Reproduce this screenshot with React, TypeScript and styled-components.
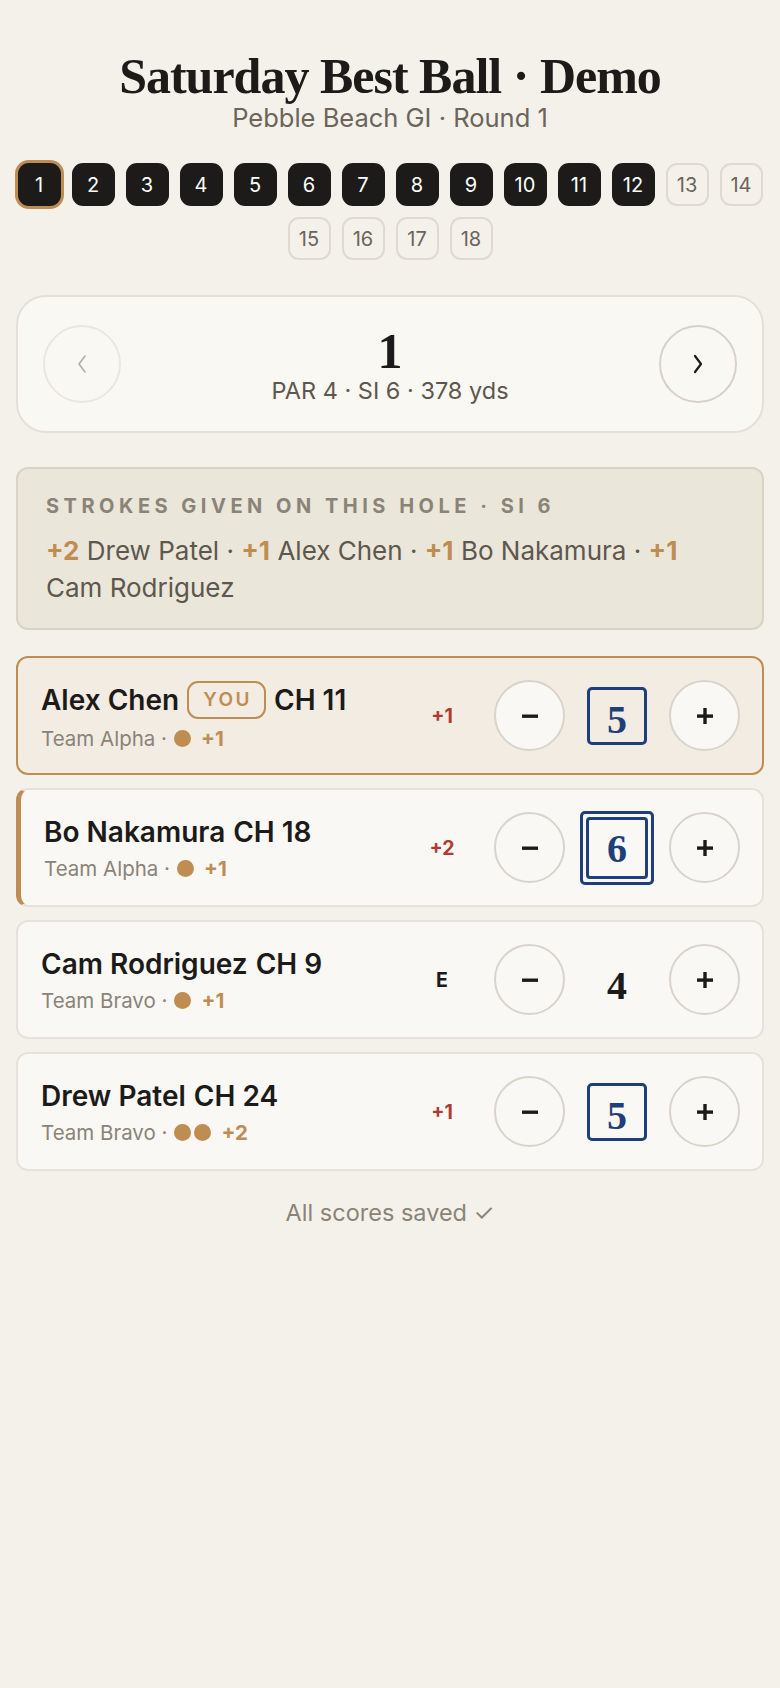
import React from "react";
import styled, { createGlobalStyle, css } from "styled-components";

const Global = createGlobalStyle`
  html, body { margin: 0; padding: 0; background: #f4f1ea; }
  body { font-family: Inter, "Noto Sans", sans-serif; color: #1c1b19; }
  * { box-sizing: border-box; }
`;

const Page = styled.div`
  width: 780px;
  min-height: 1688px;
  padding: 44px 16px 40px;
  display: flex;
  flex-direction: column;
  align-items: stretch;
`;

const Header = styled.header`
  display: flex;
  flex-direction: column;
  align-items: center;
  margin-bottom: 31px;
`;

const Title = styled.h1`
  margin: 0;
  font-family: "Liberation Serif", "DejaVu Serif", serif;
  font-weight: 700;
  font-size: 50px;
  line-height: 64px;
  letter-spacing: -1px;
  color: #1c1b19;
`;

const Subtitle = styled.div`
  font-size: 25.5px;
  line-height: 28px;
  color: #6b645a;
  margin-top: -4px;
`;

const HoleStrip = styled.nav`
  display: flex;
  flex-wrap: wrap;
  justify-content: center;
  gap: 11px 11px;
  margin-bottom: 35px;
`;

const Chip = styled.button<{ $state: "current" | "done" | "todo" }>`
  width: 43px;
  height: 43px;
  border-radius: 11px;
  font-family: Inter, sans-serif;
  font-size: 20px;
  display: flex;
  align-items: center;
  justify-content: center;
  padding: 0;
  ${(p) =>
    p.$state === "todo"
      ? css`
          background: transparent;
          border: 2px solid #dedad1;
          color: #6b645a;
        `
      : css`
          background: #1c1b19;
          border: none;
          color: #ffffff;
        `}
  ${(p) =>
    p.$state === "current" &&
    css`
      box-shadow: 0 0 0 3px #bf8d52;
    `}
`;

const HoleCard = styled.section`
  background: #faf8f3;
  border: 2px solid #e4e0d8;
  border-radius: 30px;
  height: 138px;
  padding: 0 25px;
  display: flex;
  align-items: center;
  justify-content: space-between;
  margin-bottom: 34px;
`;

const NavButton = styled.button<{ $enabled: boolean }>`
  width: 78px;
  height: 78px;
  border-radius: 50%;
  background: transparent;
  border: 2px solid ${(p) => (p.$enabled ? "#d6d2ca" : "#eae7e1")};
  color: ${(p) => (p.$enabled ? "#1c1b19" : "#b3aea5")};
  display: flex;
  align-items: center;
  justify-content: center;
  padding: 0;
`;

const HoleInfo = styled.div`
  display: flex;
  flex-direction: column;
  align-items: center;
`;

const HoleNumber = styled.div`
  font-family: "Liberation Serif", serif;
  font-weight: 700;
  font-size: 50px;
  line-height: 50px;
  margin-top: 4px;
`;

const HoleMeta = styled.div`
  font-size: 23.5px;
  line-height: 30px;
  color: #5d574e;
`;

const StrokesBox = styled.section`
  background: #ebe6da;
  border: 2px solid #d9d3c6;
  border-radius: 12px;
  padding: 25px 28px 22px;
  margin-bottom: 26px;
`;

const StrokesLabel = styled.div`
  font-size: 20px;
  font-weight: 700;
  letter-spacing: 4.5px;
  color: #8a8378;
  line-height: 24px;
  margin-bottom: 14px;
`;

const StrokesText = styled.div`
  font-size: 26px;
  line-height: 37px;
  color: #5d574e;
`;

const Gold = styled.span`
  color: #bf8d52;
  font-weight: 700;
`;

const PlayerList = styled.div`
  display: flex;
  flex-direction: column;
  gap: 13px;
`;

const PlayerCard = styled.div<{ $me?: boolean; $accent?: boolean }>`
  height: 119px;
  border-radius: 12px;
  display: flex;
  align-items: center;
  padding: 0 22px 0 23px;
  background: ${(p) => (p.$me ? "#f3ece2" : "#faf8f4")};
  border: 2px solid ${(p) => (p.$me ? "#bf8d52" : "#e6e2da")};
  ${(p) =>
    p.$accent &&
    css`
      border-left: 5px solid #bf8d52;
      padding-left: 23px;
    `}
`;

const PlayerInfo = styled.div`
  flex: 1;
  display: flex;
  flex-direction: column;
  gap: 8px;
`;

const NameRow = styled.div`
  display: flex;
  align-items: center;
  gap: 8px;
  font-size: 28px;
  font-weight: 600;
  line-height: 34px;
  color: #1c1b19;
`;

const YouBadge = styled.span`
  border: 2px solid #bf8d52;
  border-radius: 11px;
  color: #bf8d52;
  font-size: 19px;
  font-weight: 600;
  letter-spacing: 2.5px;
  height: 38px;
  padding: 0 12px 0 14px;
  display: inline-flex;
  align-items: center;
`;

const SubRow = styled.div`
  display: flex;
  align-items: center;
  font-size: 20.5px;
  color: #8a8378;
  line-height: 24px;
`;

const Dots = styled.span`
  display: inline-flex;
  gap: 3px;
  margin-left: 7px;
  margin-right: 10px;
`;

const Dot = styled.span`
  width: 17px;
  height: 17px;
  border-radius: 50%;
  background: #bf8d52;
`;

const DotValue = styled.span`
  color: #bf8d52;
  font-weight: 700;
`;

const Diff = styled.div<{ $even?: boolean }>`
  width: 60px;
  text-align: center;
  font-size: 19.5px;
  font-weight: 700;
  color: ${(p) => (p.$even ? "#1c1b19" : "#b03a32")};
  margin-right: 22px;
`;

const Controls = styled.div`
  display: flex;
  align-items: center;
  gap: 15px;
`;

const StepButton = styled.button`
  width: 71px;
  height: 71px;
  border-radius: 50%;
  background: #faf8f4;
  border: 2px solid #d8d4cc;
  display: flex;
  align-items: center;
  justify-content: center;
  padding: 0;
  color: #1c1b19;
`;

const ScoreSlot = styled.div`
  width: 74px;
  height: 74px;
  display: flex;
  align-items: center;
  justify-content: center;
`;

const ScoreBox = styled.div<{ $kind: "par" | "bogey" | "double" }>`
  font-family: "Liberation Serif", serif;
  font-size: 40px;
  font-weight: 700;
  display: flex;
  align-items: center;
  justify-content: center;
  color: ${(p) => (p.$kind === "par" ? "#1c1b19" : "#1e3f7a")};
  ${(p) =>
    p.$kind === "bogey" &&
    css`
      width: 60px;
      height: 58px;
      border: 3px solid #1e3f7a;
      border-radius: 5px;
      padding-top: 8px;
    `}
  ${(p) =>
    p.$kind === "double" &&
    css`
      width: 74px;
      height: 74px;
      border: 3px solid #1e3f7a;
      border-radius: 5px;
      padding: 3px;
    `}
  ${(p) =>
    p.$kind === "par" &&
    css`
      padding-top: 12px;
    `}
`;

const InnerBox = styled.div`
  width: 100%;
  height: 100%;
  border: 3px solid #1e3f7a;
  border-radius: 4px;
  display: flex;
  align-items: center;
  justify-content: center;
  padding-top: 2px;
`;

const Saved = styled.div`
  text-align: center;
  margin-top: 27px;
  font-size: 23.5px;
  line-height: 30px;
  color: #8a8378;
`;

const Chevron = ({ dir }: { dir: "left" | "right" }) => (
  <svg width="14" height="22" viewBox="0 0 14 22" fill="none">
    <polyline
      points={dir === "left" ? "10,3 4,11 10,19" : "4,3 10,11 4,19"}
      stroke="currentColor"
      strokeWidth={dir === "left" ? 1.6 : 2.2}
      strokeLinecap="round"
      strokeLinejoin="round"
    />
  </svg>
);

const Minus = () => (
  <svg width="20" height="20" viewBox="0 0 20 20">
    <rect x="2" y="8.5" width="16" height="3.4" fill="currentColor" />
  </svg>
);

const Plus = () => (
  <svg width="20" height="20" viewBox="0 0 20 20">
    <rect x="2" y="8.4" width="16" height="3.4" fill="currentColor" />
    <rect x="8.3" y="2" width="3.4" height="16" fill="currentColor" />
  </svg>
);

type Player = {
  name: string;
  ch: number;
  team: string;
  dots: number;
  me?: boolean;
  accent?: boolean;
  diff: string;
  score: number;
  kind: "par" | "bogey" | "double";
};

const players: Player[] = [
  { name: "Alex Chen", ch: 11, team: "Team Alpha", dots: 1, me: true, diff: "+1", score: 5, kind: "bogey" },
  { name: "Bo Nakamura", ch: 18, team: "Team Alpha", dots: 1, accent: true, diff: "+2", score: 6, kind: "double" },
  { name: "Cam Rodriguez", ch: 9, team: "Team Bravo", dots: 1, diff: "E", score: 4, kind: "par" },
  { name: "Drew Patel", ch: 24, team: "Team Bravo", dots: 2, diff: "+1", score: 5, kind: "bogey" },
];

export default function App() {
  const holes = Array.from({ length: 18 }, (_, i) => i + 1);
  return (
    <>
      <Global />
      <Page>
        <Header>
          <Title>Saturday Best Ball · Demo</Title>
          <Subtitle>Pebble Beach GI · Round 1</Subtitle>
        </Header>

        <HoleStrip>
          {holes.map((h) => (
            <Chip key={h} $state={h === 1 ? "current" : h <= 12 ? "done" : "todo"}>
              {h}
            </Chip>
          ))}
        </HoleStrip>

        <HoleCard>
          <NavButton $enabled={false}>
            <Chevron dir="left" />
          </NavButton>
          <HoleInfo>
            <HoleNumber>1</HoleNumber>
            <HoleMeta>PAR 4 · SI 6 · 378 yds</HoleMeta>
          </HoleInfo>
          <NavButton $enabled>
            <Chevron dir="right" />
          </NavButton>
        </HoleCard>

        <StrokesBox>
          <StrokesLabel>STROKES GIVEN ON THIS HOLE · SI 6</StrokesLabel>
          <StrokesText>
            <Gold>+2</Gold> Drew Patel · <Gold>+1</Gold> Alex Chen · <Gold>+1</Gold> Bo Nakamura ·{" "}
            <Gold>+1</Gold> Cam Rodriguez
          </StrokesText>
        </StrokesBox>

        <PlayerList>
          {players.map((p) => (
            <PlayerCard key={p.name} $me={p.me} $accent={p.accent}>
              <PlayerInfo>
                <NameRow>
                  {p.name}
                  {p.me && <YouBadge>YOU</YouBadge>}
                  <span>CH {p.ch}</span>
                </NameRow>
                <SubRow>
                  {p.team} ·
                  <Dots>
                    {Array.from({ length: p.dots }, (_, i) => (
                      <Dot key={i} />
                    ))}
                  </Dots>
                  <DotValue>+{p.dots}</DotValue>
                </SubRow>
              </PlayerInfo>
              <Diff $even={p.diff === "E"}>{p.diff}</Diff>
              <Controls>
                <StepButton aria-label="minus">
                  <Minus />
                </StepButton>
                <ScoreSlot>
                  <ScoreBox $kind={p.kind}>
                    {p.kind === "double" ? <InnerBox>{p.score}</InnerBox> : p.score}
                  </ScoreBox>
                </ScoreSlot>
                <StepButton aria-label="plus">
                  <Plus />
                </StepButton>
              </Controls>
            </PlayerCard>
          ))}
        </PlayerList>

        <Saved>All scores saved ✓</Saved>
      </Page>
    </>
  );
}
